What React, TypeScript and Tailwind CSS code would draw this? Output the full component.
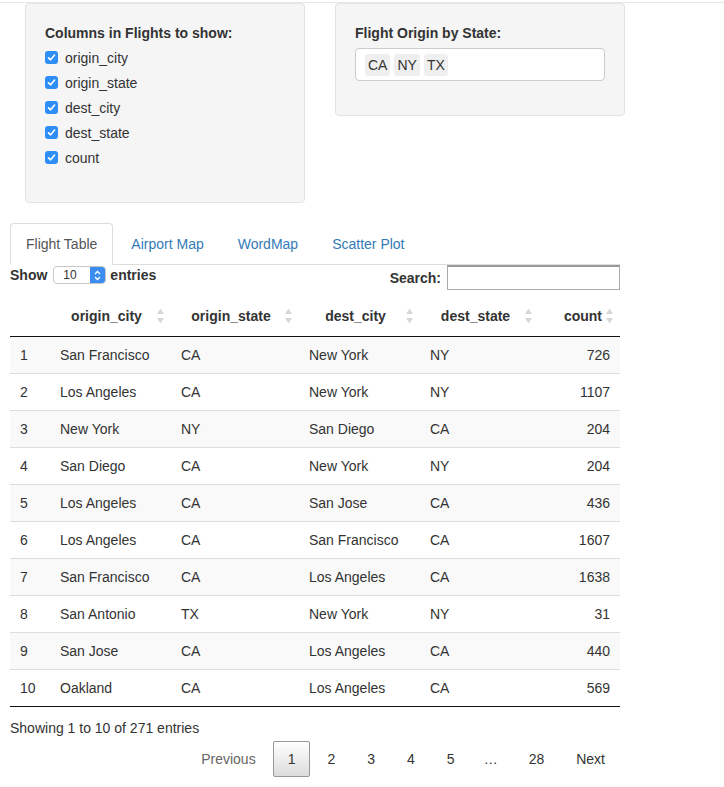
import React from 'react';

const rows = [
    ['1', 'San Francisco', 'CA', 'New York', 'NY', '726'],
    ['2', 'Los Angeles', 'CA', 'New York', 'NY', '1107'],
    ['3', 'New York', 'NY', 'San Diego', 'CA', '204'],
    ['4', 'San Diego', 'CA', 'New York', 'NY', '204'],
    ['5', 'Los Angeles', 'CA', 'San Jose', 'CA', '436'],
    ['6', 'Los Angeles', 'CA', 'San Francisco', 'CA', '1607'],
    ['7', 'San Francisco', 'CA', 'Los Angeles', 'CA', '1638'],
    ['8', 'San Antonio', 'TX', 'New York', 'NY', '31'],
    ['9', 'San Jose', 'CA', 'Los Angeles', 'CA', '440'],
    ['10', 'Oakland', 'CA', 'Los Angeles', 'CA', '569'],
];

const columns = ['origin_city', 'origin_state', 'dest_city', 'dest_state', 'count'];

const Checkbox = () => (
    <span className="inline-flex w-[13px] h-[13px] rounded-[3px] bg-[#2d8ef5] items-center justify-center">
        <svg width="9" height="9" viewBox="0 0 9 9">
            <path d="M1.5 4.8 L3.6 6.8 L7.6 2" fill="none" stroke="white" strokeWidth="1.6" strokeLinecap="round" strokeLinejoin="round" />
        </svg>
    </span>
);

const SortIcon = () => (
    <svg className="absolute right-[6px] top-1/2 -translate-y-1/2" width="9" height="19" viewBox="0 0 9 19">
        <path d="M4.5 2 L8 7.5 L1 7.5 Z" fill="#d8d8d8" />
        <path d="M4.5 17 L8 11.5 L1 11.5 Z" fill="#d8d8d8" />
    </svg>
);

export default function App() {
    const tabs = ['Flight Table', 'Airport Map', 'WordMap', 'Scatter Plot'];
    const pages = ['2', '3', '4', '5'];

    return (
        <div className="w-[724px] min-h-[787px] bg-white text-[#333] text-[14px] leading-[20px] font-['Liberation_Sans',Arial,sans-serif]">
            <div className="h-[3px] border-b border-[#e7e7e7]" />

            {/* input panels */}
            <div className="flex items-start pl-[25px]">
                <div className="w-[280px] h-[200px] bg-[#f5f5f5] border border-[#e3e3e3] rounded-[4px] px-[19px] pt-[19px]">
                    <div className="font-bold mb-[5px]">Columns in Flights to show:</div>
                    <div className="flex flex-col">
                        {columns.map((c) => (
                            <div key={c} className="flex items-center h-[25px] -mt-[3px] mb-[3px]">
                                <Checkbox />
                                <span className="ml-[7px]">{c}</span>
                            </div>
                        ))}
                    </div>
                </div>

                <div className="w-[290px] h-[113px] ml-[30px] bg-[#f5f5f5] border border-[#e3e3e3] rounded-[4px] px-[19px] pt-[19px]">
                    <div className="font-bold mb-[5px]">Flight Origin by State:</div>
                    <div className="w-[250px] h-[33px] bg-white border border-[#cccccc] rounded-[4px] flex items-center gap-[4px] pl-[9px]">
                        {['CA', 'NY', 'TX'].map((s) => (
                            <span key={s} className="h-[22px] px-[3px] bg-[#efefef] rounded-[3px] flex items-center">{s}</span>
                        ))}
                    </div>
                </div>
            </div>

            {/* tabs + table */}
            <div className="ml-[10px] w-[610px] mt-[20px]">
                <ul className="flex border-b border-[#dddddd]">
                    {tabs.map((t, i) => (
                        <li
                            key={t}
                            className={
                                i === 0
                                    ? '-mb-px mr-[2px] px-[15px] py-[10px] border border-[#dddddd] border-b-white rounded-t-[4px] bg-white text-[#555]'
                                    : '-mb-px mr-[2px] px-[15px] py-[10px] border border-transparent text-[#337ab7]'
                            }
                        >
                            {t}
                        </li>
                    ))}
                </ul>

                <div className="flex justify-between items-start h-[31px]">
                    <div className="flex items-center h-[20px] font-bold">
                        <span>Show</span>
                        <span className="ml-[6px] mr-[4px] w-[53px] h-[18px] border border-[#c8c8c8] rounded-[4px] bg-white flex overflow-hidden font-normal text-[12px] leading-[16px]">
                            <span className="flex-1 pl-[9px]">10</span>
                            <span className="w-[15px] bg-[#3a8cf0] flex items-center justify-center">
                                <svg width="7" height="11" viewBox="0 0 7 11">
                                    <path d="M1 4 L3.5 1.5 L6 4 M1 7 L3.5 9.5 L6 7" fill="none" stroke="white" strokeWidth="1.3" />
                                </svg>
                            </span>
                        </span>
                        <span>entries</span>
                    </div>
                    <div className="flex items-center font-bold">
                        <span>Search:</span>
                        <span className="ml-[6px] w-[173px] h-[25px] bg-white border border-[#aaaaaa] border-t-[#999] border-t-2" />
                    </div>
                </div>

                <table className="w-[610px] table-fixed border-collapse border-b border-[#111]">
                    <colgroup>
                        <col className="w-[40px]" />
                        <col className="w-[121px]" />
                        <col className="w-[128px]" />
                        <col className="w-[121px]" />
                        <col className="w-[119px]" />
                        <col className="w-[81px]" />
                    </colgroup>
                    <thead>
                        <tr className="border-b border-[#111]">
                            <th className="h-[40px]" />
                            {columns.map((c) => (
                                <th
                                    key={c}
                                    className={
                                        'relative font-bold pl-[10px] pr-[18px] py-[10px] ' +
                                        (c === 'count' ? 'text-right' : 'text-center')
                                    }
                                >
                                    {c}
                                    <SortIcon />
                                </th>
                            ))}
                        </tr>
                    </thead>
                    <tbody>
                        {rows.map((r, i) => (
                            <tr
                                key={r[0]}
                                className={
                                    (i % 2 === 0 ? 'bg-[#f9f9f9] ' : 'bg-white ') +
                                    (i > 0 ? 'border-t border-[#dddddd]' : '')
                                }
                            >
                                {r.map((cell, j) => (
                                    <td key={j} className={'px-[10px] py-[8px] ' + (j === 5 ? 'text-right' : 'text-left')}>
                                        {cell}
                                    </td>
                                ))}
                            </tr>
                        ))}
                    </tbody>
                </table>

                <div className="pt-[11px]">Showing 1 to 10 of 271 entries</div>

                <div className="flex justify-end items-center mt-[2px]">
                    <span className="px-[14px] py-[8px] ml-[2px] border border-transparent text-[#666]">Previous</span>
                    <span className="px-[14px] py-[7px] ml-[2px] border border-[#979797] rounded-[2px] bg-gradient-to-b from-white to-[#dcdcdc]">1</span>
                    {pages.map((p) => (
                        <span key={p} className="px-[14px] py-[8px] ml-[2px] border border-transparent">{p}</span>
                    ))}
                    <span className="px-[14px] py-[8px]">…</span>
                    <span className="px-[14px] py-[8px] ml-[2px] border border-transparent">28</span>
                    <span className="px-[14px] py-[8px] ml-[2px] border border-transparent">Next</span>
                </div>
            </div>
        </div>
    );
}
